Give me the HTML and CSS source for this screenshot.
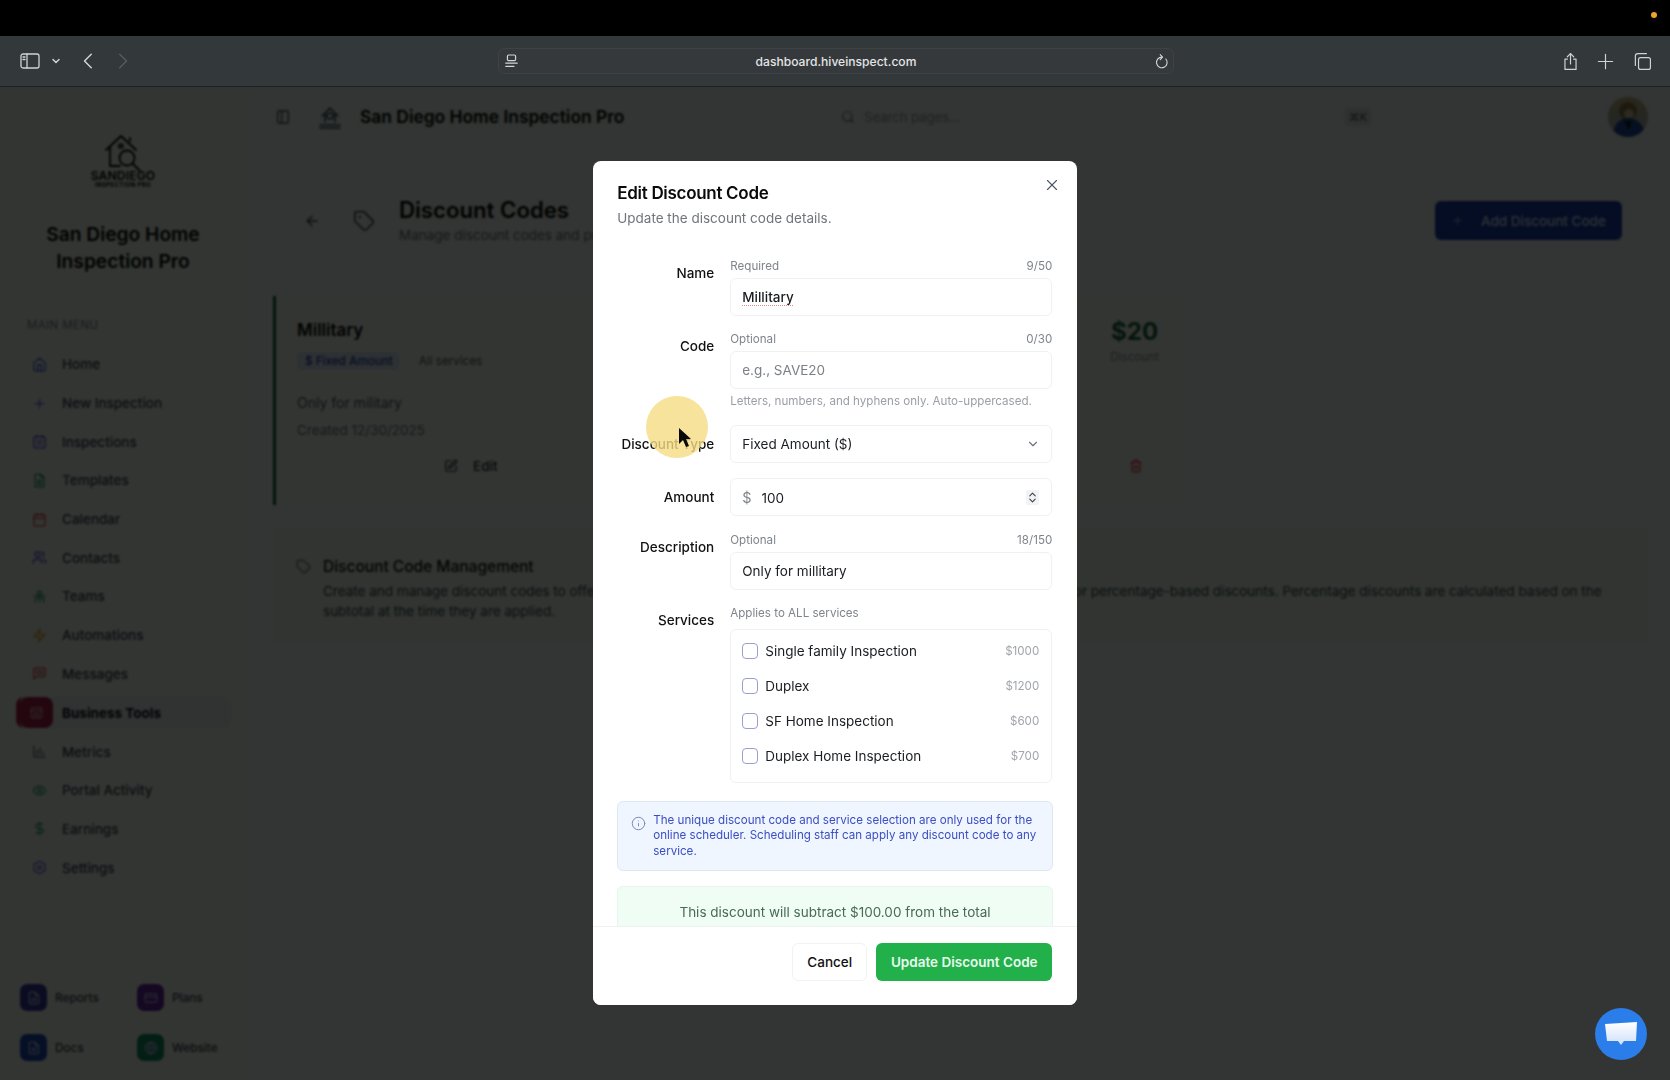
FILE: index.html
```html
<!DOCTYPE html>
<html lang="en">
<head>
<meta charset="utf-8">
<title>Discount Codes</title>
<link rel="stylesheet" href="styles.css">
</head>
<body>
<div class="os-bar"><span class="os-dot"></span></div>
<header class="toolbar">
  <div class="tb-left">
    <svg class="ic tb-panel" viewBox="0 0 20 16"><rect x="1" y="1" width="18" height="14" rx="2"/><path d="M7 1v14M3 4h2M3 6.500h2"/></svg>
    <svg class="ic tb-chev" viewBox="0 0 24 24"><path d="m6 9 6 6 6-6"/></svg>
    <svg class="ic tb-nav" viewBox="0 0 24 24"><path d="m15 3-9 9 9 9"/></svg>
    <svg class="ic tb-nav tb-off" viewBox="0 0 24 24"><path d="m9 3 9 9-9 9"/></svg>
  </div>
  <div class="url">
    <svg class="ic url-site" viewBox="0 0 16 18"><rect x="3" y="1" width="10" height="7" rx="1.500"/><path d="M1 11h14M1 15h10"/></svg>
    <span class="url-text">dashboard.hiveinspect.com</span>
    <svg class="ic url-reload" viewBox="0 0 24 24"><path d="M13 5a8.500 8.500 0 1 0 6 3"/><path d="m10 1 3.500 4-3.500 4"/></svg>
  </div>
  <div class="tb-right">
    <svg class="ic tb-act" viewBox="0 0 24 24"><path d="M8 9H5v13h14V9h-3"/><path d="M16 6l-4-4-4 4"/><path d="M12 2v13"/></svg>
    <svg class="ic tb-act" viewBox="0 0 24 24"><path d="M3 12h18M12 3v18"/></svg>
    <svg class="ic tb-act tb-tabs" viewBox="0 0 24 24"><rect x="7" y="7" width="15" height="15" rx="2.500"/><path d="M3 17V5a3 3 0 0 1 3-3h11"/></svg>
  </div>
</header>

<div class="app">
  <aside class="sidebar">
    <div class="brand">
      <svg class="ic logo-mark" viewBox="0 0 40 38"><path d="M3 17 18 3l15 14M7 14v19h10M27 8V5"/><path d="M16 11h4v4h-4zM18 11v4M16 13h4" class="thin"/><circle cx="24" cy="25" r="7.500"/><path d="m29.500 30.500 7 7"/></svg>
      <div class="logo-word">SANDIEGO</div>
      <div class="logo-sub">INSPECTION PRO</div>
      <h1 class="brand-name">San Diego Home Inspection Pro</h1>
    </div>
    <div class="menu-title">MAIN MENU</div>
    <nav class="nav">
      <a class="nav-item"><svg class="ic nav-ic c-blue" viewBox="0 0 24 24"><path d="m3 9 9-7 9 7v11a2 2 0 0 1-2 2H5a2 2 0 0 1-2-2z"/><path d="M9 22V12h6v10"/></svg>Home</a>
      <a class="nav-item"><svg class="ic nav-ic c-violet" viewBox="0 0 24 24"><path d="M5 12h14M12 5v14"/></svg>New Inspection</a>
      <a class="nav-item"><svg class="ic nav-ic c-indigo" viewBox="0 0 24 24"><rect x="3" y="4" width="18" height="18" rx="2"/><path d="M8 2v4M16 2v4M8 11h8M8 16h8"/></svg>Inspections</a>
      <a class="nav-item"><svg class="ic nav-ic c-green" viewBox="0 0 24 24"><path d="M14 2H5v20h14V7z"/><path d="M14 2v5h5M8 12h8M8 17h8M12 11v8"/></svg>Templates</a>
      <a class="nav-item"><svg class="ic nav-ic c-red" viewBox="0 0 24 24"><rect x="3" y="4" width="18" height="18" rx="2"/><path d="M16 2v4M8 2v4M3 10h18"/></svg>Calendar</a>
      <a class="nav-item"><svg class="ic nav-ic c-indigo" viewBox="0 0 24 24"><path d="M16 21v-2a4 4 0 0 0-4-4H6a4 4 0 0 0-4 4v2"/><circle cx="9" cy="7" r="4"/><path d="M22 21v-2a4 4 0 0 0-3-3.870"/><path d="M16 3.130a4 4 0 0 1 0 7.750"/></svg>Contacts</a>
      <a class="nav-item"><svg class="ic nav-ic c-green" viewBox="0 0 24 24"><circle cx="12" cy="6" r="3"/><path d="M5 21v-3a4 4 0 0 1 4-4h6a4 4 0 0 1 4 4v3M12 14v7M3 11h18"/></svg>Teams</a>
      <a class="nav-item"><svg class="ic nav-ic c-amber" viewBox="0 0 24 24"><path d="M13 2 3 14h9l-1 8 10-12h-9z"/></svg>Automations</a>
      <a class="nav-item"><svg class="ic nav-ic c-red" viewBox="0 0 24 24"><path d="M21 15a2 2 0 0 1-2 2H7l-4 4V5a2 2 0 0 1 2-2h14a2 2 0 0 1 2 2z"/><path d="M7 8h10M7 12h10"/></svg>Messages</a>
      <a class="nav-item nav-active"><span class="nav-badge"><svg class="ic nav-ic" viewBox="0 0 24 24"><path d="m3 9 2-5h14l2 5"/><path d="M4 9v11h16V9M3 9h18M9 20v-6h6v6"/></svg></span>Business Tools</a>
      <a class="nav-item"><svg class="ic nav-ic c-gray" viewBox="0 0 24 24"><path d="M3 3v18h18M8 17v-7M13 17V6M18 17v-4"/></svg>Metrics</a>
      <a class="nav-item"><svg class="ic nav-ic c-green" viewBox="0 0 24 24"><path d="M2 12s3.500-7 10-7 10 7 10 7-3.500 7-10 7-10-7-10-7z"/><circle cx="12" cy="12" r="3"/></svg>Portal Activity</a>
      <a class="nav-item"><svg class="ic nav-ic c-green" viewBox="0 0 24 24"><path d="M12 2v20"/><path d="M17 5H9.500a3.500 3.500 0 0 0 0 7h5a3.500 3.500 0 0 1 0 7H6"/></svg>Earnings</a>
      <a class="nav-item"><svg class="ic nav-ic c-violet" viewBox="0 0 24 24"><path d="m12 2 8.660 5v10L12 22l-8.660-5V7z"/><circle cx="12" cy="12" r="3"/></svg>Settings</a>
    </nav>
    <div class="quick">
      <a class="quick-item"><span class="quick-badge q-indigo"><svg class="ic" viewBox="0 0 24 24"><path d="M14 2H6a2 2 0 0 0-2 2v16a2 2 0 0 0 2 2h12a2 2 0 0 0 2-2V8z"/><path d="M14 2v6h6M16 13H8M16 17H8"/></svg></span>Reports</a>
      <a class="quick-item"><span class="quick-badge q-purple"><svg class="ic" viewBox="0 0 24 24"><rect x="2" y="5" width="20" height="14" rx="2"/><path d="M2 10h20"/></svg></span>Plans</a>
      <a class="quick-item"><span class="quick-badge q-blue"><svg class="ic" viewBox="0 0 24 24"><path d="M14 2H6a2 2 0 0 0-2 2v16a2 2 0 0 0 2 2h12a2 2 0 0 0 2-2V8z"/><path d="M14 2v6h6M16 13H8M16 17H8"/></svg></span>Docs</a>
      <a class="quick-item"><span class="quick-badge q-teal"><svg class="ic" viewBox="0 0 24 24"><circle cx="12" cy="12" r="10"/><path d="M2 12h20"/><path d="M12 2a15.300 15.300 0 0 1 4 10 15.300 15.300 0 0 1-4 10 15.300 15.300 0 0 1-4-10 15.300 15.300 0 0 1 4-10z"/></svg></span>Website</a>
    </div>
  </aside>

  <main class="main">
    <div class="topbar">
      <svg class="ic top-toggle" viewBox="0 0 24 24"><rect x="4" y="3" width="16" height="18" rx="2"/><path d="M10 3v18"/></svg>
      <svg class="ic top-logo" viewBox="0 0 24 24"><path d="M4 11 12 3l8 8M7 9v8M17 9v8"/><circle cx="12" cy="11" r="3"/><path d="M2 20h20M2 23h20"/></svg>
      <span class="top-title">San Diego Home Inspection Pro</span>
      <div class="search">
        <svg class="ic search-ic" viewBox="0 0 24 24"><circle cx="11" cy="11" r="8"/><path d="m21 21-4.300-4.300"/></svg>
        <span class="search-text">Search pages...</span>
        <kbd class="kbd">⌘K</kbd>
      </div>
      <svg class="avatar" viewBox="0 0 40 40"><defs><clipPath id="av"><circle cx="20" cy="20" r="20"/></clipPath></defs><g clip-path="url(#av)"><rect width="40" height="40" fill="#b9b6ac"/><path d="M0 0h40v12H0z" fill="#c9b792"/><circle cx="20" cy="14" r="9" fill="#8f7346"/><circle cx="21" cy="17" r="5" fill="#d9c3a8"/><path d="M5 40c0-14 8-19 15-19s17 5 17 19z" fill="#1f49a8"/><path d="M16 24h8l-3 9z" fill="#111"/></g></svg>
    </div>

    <section class="page-head">
      <svg class="ic back" viewBox="0 0 24 24"><path d="m12 19-7-7 7-7"/><path d="M19 12H5"/></svg>
      <svg class="ic head-tag" viewBox="0 0 24 24"><path d="M12.586 2.586A2 2 0 0 0 11.172 2H4a2 2 0 0 0-2 2v7.172a2 2 0 0 0 .586 1.414l8.704 8.704a2.426 2.426 0 0 0 3.420 0l6.580-6.580a2.426 2.426 0 0 0 0-3.420z"/><circle cx="7.500" cy="7.500" r=".5"/></svg>
      <div class="head-text">
        <h2 class="head-title">Discount Codes</h2>
        <p class="head-sub">Manage discount codes and promotions for your business</p>
      </div>
      <button class="add-btn"><svg class="ic add-ic" viewBox="0 0 24 24"><path d="M5 12h14M12 5v14"/></svg>Add Discount Code</button>
    </section>

    <article class="code-card">
      <div class="card-top">
        <div>
          <h3 class="card-title">Millitary</h3>
          <div class="card-tags"><span class="tag-blue">$ Fixed Amount</span><span class="tag-plain">All services</span></div>
        </div>
        <div class="card-value"><strong>$20</strong><span>Discount</span></div>
      </div>
      <p class="card-desc">Only for military</p>
      <p class="card-date">Created 12/30/2025</p>
      <div class="card-actions">
        <span class="card-edit"><svg class="ic edit-ic" viewBox="0 0 24 24"><path d="M12 3H5a2 2 0 0 0-2 2v14a2 2 0 0 0 2 2h14a2 2 0 0 0 2-2v-7"/><path d="M18.375 2.625a1 1 0 0 1 3 3l-9.013 9.014a2 2 0 0 1-.853.505l-2.873.84a.5.5 0 0 1-.62-.62l.84-2.873a2 2 0 0 1 .506-.852z"/></svg>Edit</span>
        <svg class="ic trash-ic" viewBox="0 0 24 24"><path d="M3 6h18"/><path d="M19 6v14c0 1-1 2-2 2H7c-1 0-2-1-2-2V6"/><path d="M8 6V4c0-1 1-2 2-2h4c1 0 2 1 2 2v2"/><path d="M10 11v6M14 11v6"/></svg>
      </div>
    </article>

    <section class="mgmt">
      <svg class="ic mgmt-ic" viewBox="0 0 24 24"><path d="M12.586 2.586A2 2 0 0 0 11.172 2H4a2 2 0 0 0-2 2v7.172a2 2 0 0 0 .586 1.414l8.704 8.704a2.426 2.426 0 0 0 3.420 0l6.580-6.580a2.426 2.426 0 0 0 0-3.420z"/></svg>
      <div>
        <h3 class="mgmt-title">Discount Code Management</h3>
        <p class="mgmt-text">Create and manage discount codes to offer special pricing to all your clients. You can create both fixed dollar amount or percentage-based discounts. Percentage discounts are calculated based on the subtotal at the time they are applied.</p>
      </div>
    </section>
  </main>

  <div class="overlay">
    <div class="modal">
      <svg class="ic modal-close" viewBox="0 0 24 24"><path d="M18 6 6 18"/><path d="m6 6 12 12"/></svg>
      <div class="modal-head">
        <h2 class="modal-title">Edit Discount Code</h2>
        <p class="modal-sub">Update the discount code details.</p>
      </div>
      <div class="modal-body">
        <div class="form-row">
          <label class="form-label lab-hint">Name</label>
          <div>
            <div class="hint-row"><span>Required</span><span>9/50</span></div>
            <div class="field"><span class="spell">Millitary</span></div>
          </div>
        </div>
        <div class="form-row">
          <label class="form-label lab-hint">Code</label>
          <div>
            <div class="hint-row"><span>Optional</span><span>0/30</span></div>
            <div class="field field-ph">e.g., SAVE20</div>
            <p class="help">Letters, numbers, and hyphens only. Auto-uppercased.</p>
          </div>
        </div>
        <div class="form-row">
          <label class="form-label lab-center">Discount Type</label>
          <div class="field field-between">Fixed Amount ($)<svg class="ic sel-chev" viewBox="0 0 24 24"><path d="m6 9 6 6 6-6"/></svg></div>
        </div>
        <div class="form-row">
          <label class="form-label lab-center">Amount</label>
          <div class="field field-between"><span><span class="dollar">$</span>100</span><svg class="ic spin" viewBox="0 0 24 24"><path d="m7 15 5 5 5-5"/><path d="m7 9 5-5 5 5"/></svg></div>
        </div>
        <div class="form-row">
          <label class="form-label lab-hint">Description</label>
          <div>
            <div class="hint-row"><span>Optional</span><span>18/150</span></div>
            <div class="field">Only for millitary</div>
          </div>
        </div>
        <div class="form-row">
          <label class="form-label lab-hint">Services</label>
          <div>
            <div class="hint-row hint-services"><span>Applies to ALL services</span></div>
            <div class="services">
              <div class="svc"><span class="check"></span><span class="svc-name">Single family Inspection</span><span class="svc-price">$1000</span></div>
              <div class="svc"><span class="check"></span><span class="svc-name">Duplex</span><span class="svc-price">$1200</span></div>
              <div class="svc"><span class="check"></span><span class="svc-name">SF Home Inspection</span><span class="svc-price">$600</span></div>
              <div class="svc"><span class="check"></span><span class="svc-name">Duplex Home Inspection</span><span class="svc-price">$700</span></div>
            </div>
          </div>
        </div>
        <div class="note">
          <svg class="ic note-ic" viewBox="0 0 24 24"><circle cx="12" cy="12" r="10"/><path d="M12 16v-4"/><path d="M12 8h.01"/></svg>
          <p>The unique discount code and service selection are only used for the online scheduler. Scheduling staff can apply any discount code to any service.</p>
        </div>
        <div class="preview">This discount will subtract $100.00 from the total</div>
      </div>
      <div class="modal-foot">
        <button class="btn-cancel">Cancel</button>
        <button class="btn-save">Update Discount Code</button>
      </div>
      <span class="cursor-halo"></span>
      <svg class="cursor" viewBox="0 0 14 22"><path d="M1 1v16l4-4 3 7 3-1-3-7h5z"/></svg>
    </div>
  </div>

  <button class="chat"><svg viewBox="0 0 32 24"><defs><linearGradient id="cg" x1="0" y1="0" x2="0" y2="1"><stop offset="0" stop-color="#ffffff"/><stop offset="1" stop-color="#cfe0fa"/></linearGradient></defs><path d="M0 2 32 0l-1 19H19l-3 4-3-4H2z" fill="url(#cg)"/></svg></button>
</div>
</body>
</html>
```
FILE: styles.css
```css
* { box-sizing: border-box; }
html, body { margin: 0; height: 100%; }
body {
  width: 1670px;
  height: 1080px;
  overflow: hidden;
  font-family: Inter, "Liberation Sans", sans-serif;
  font-size: 13.500px;
  color: #111827;
  background: #000;
  display: flex;
  flex-direction: column;
}
h1, h2, h3, p { margin: 0; }
button { font: inherit; border: 0; padding: 0; }

.ic {
  fill: none;
  stroke: currentColor;
  stroke-width: 2;
  stroke-linecap: round;
  stroke-linejoin: round;
  flex: none;
  display: block;
}

/* OS + browser chrome */
.os-bar { height: 36px; background: #000; display: flex; justify-content: flex-end; align-items: center; padding: 0 13px 7px 0; flex: none; }
.os-dot { width: 6px; height: 6px; border-radius: 50%; background: #f0a02c; }
.toolbar {
  height: 51px;
  flex: none;
  background: #33383a;
  border-bottom: 1px solid #1f2224;
  display: grid;
  grid-template-columns: 1fr 676px 1fr;
  align-items: center;
  padding: 0 18px 0 20px;
}
.tb-left { display: flex; align-items: center; color: #cfd3d5; }
.tb-panel { width: 20px; height: 16px; stroke-width: 1.300; }
.tb-chev { width: 12px; height: 12px; margin-left: 10px; stroke-width: 3; }
.tb-nav { width: 18px; height: 18px; margin-left: 18px; stroke-width: 2; }
.tb-nav + .tb-nav { margin-left: 15px; }
.tb-off { color: #565b5d; }
.url {
  height: 26px;
  display: flex;
  align-items: center;
  justify-content: space-between;
  border: 1px solid #3d4244;
  border-radius: 6px;
  background: #35393b;
  padding: 0 4px 0 6px;
  color: #d3d6d8;
}
.url-site { width: 13px; height: 15px; stroke-width: 1.500; }
.url-text { font-size: 12.100px; font-weight: 500; color: #e3e5e6; }
.url-reload { width: 15px; height: 15px; stroke-width: 1.800; }
.tb-right { display: flex; justify-content: flex-end; align-items: center; gap: 16px; color: #cfd3d5; }
.tb-act { width: 19px; height: 19px; stroke-width: 1.500; }
.tb-tabs { margin-left: 2px; }

/* App */
.app { position: relative; flex: 1; display: flex; min-height: 0; background: #fff; overflow: hidden; }
.sidebar { width: 250px; flex: none; display: flex; flex-direction: column; padding: 46px 0 0 16px; }
.brand { width: 214px; display: flex; flex-direction: column; align-items: center; }
.logo-mark { width: 40px; height: 38px; color: #000; stroke-width: 1.800; }
.logo-word { font-size: 12px; line-height: 10px; font-weight: 600; color: #000; letter-spacing: .2px; margin-top: 0; }
.logo-mark .thin { stroke-width: 1; }
.logo-sub { font-size: 6px; line-height: 7px; font-weight: 700; color: #000; letter-spacing: .35px; }
.brand-name { font-size: 19.200px; line-height: 27px; font-weight: 600; text-align: center; width: 180px; color: #000; margin-top: 33px; }
.menu-title { font-size: 11.500px; line-height: 14px; color: #7b8190; margin: 43px 0 0 11px; letter-spacing: .4px; }
.nav { margin-top: 13px; display: flex; flex-direction: column; }
.nav-item {
  height: 38.700px;
  display: flex;
  align-items: center;
  gap: 15px;
  padding-left: 16px;
  width: 215px;
  font-size: 13.500px;
  font-weight: 500;
  color: #374151;
}
.nav-ic { width: 15px; height: 15px; }
.c-blue { color: #3f57e8; }
.c-violet { color: #6d4cf0; }
.c-indigo { color: #4f46e5; }
.c-green { color: #1fa35a; }
.c-red { color: #e0423f; }
.c-amber { color: #eb9a12; }
.c-gray { color: #5f6773; }
.nav-active {
  height: 31px;
  margin: 4px 0;
  padding-left: 0;
  gap: 9px;
  font-weight: 700;
  color: #0b0f19;
  background: #eef2f9;
  border-radius: 8px;
  border-left: 4px solid #b0184a;
}
.nav-badge { width: 33px; height: 31px; border-radius: 8px; background: #b0184a; color: #e8a9bf; display: flex; align-items: center; justify-content: center; }
.quick { margin-top: auto; display: grid; grid-template-columns: 117px 1fr; row-gap: 23px; padding: 0 0 19px 4px; }
.quick-item { display: flex; align-items: center; gap: 8px; font-size: 11.800px; font-weight: 500; color: #374151; }
.quick-badge { width: 27px; height: 27px; border-radius: 7px; display: flex; align-items: center; justify-content: center; color: #c9cdf5; }
.quick-badge .ic { width: 14px; height: 14px; }
.q-indigo { background: #3a32a8; }
.q-purple { background: #6a1eab; }
.q-blue { background: #1a44ba; }
.q-teal { background: #0d8a69; }

/* Main */
.main { flex: 1; min-width: 0; padding: 0 22px 0 23px; background: #fbfcfe; }
.topbar { height: 60px; display: flex; align-items: center; padding-left: 2px; }
.top-toggle { width: 16px; height: 16px; color: #4b5563; }
.top-logo { width: 24px; height: 24px; margin-left: 27px; color: #374151; stroke-width: 1.500; }
.top-title { font-size: 17.400px; font-weight: 600; margin: 0 0 2px 18px; color: #000; }
.search { display: flex; align-items: center; width: 530px; margin-left: 217px; color: #6b7280; }
.search-ic { width: 14px; height: 14px; }
.search-text { margin-left: 9px; font-size: 13px; color: #9ca3af; }
.kbd { margin-left: auto; font: 600 11px Inter, sans-serif; background: #e5e7eb; color: #6b7280; padding: 2px 4px; border-radius: 3px; }
.avatar { width: 40px; height: 40px; margin-left: auto; flex: none; }

.page-head { display: flex; align-items: center; height: 39px; margin-top: 54px; padding: 0 26px 0 31px; }
.back { width: 16px; height: 16px; color: #374151; }
.head-tag { width: 22px; height: 22px; margin-left: 33px; color: #374151; stroke-width: 1.700; }
.head-text { margin-left: 24px; }
.head-title { font-size: 22.200px; line-height: 28px; font-weight: 600; color: #000; }
.head-sub { font-size: 13.500px; line-height: 20px; color: #6b7280; margin-top: 1px; }
.add-btn { margin-left: auto; width: 187px; height: 39px; border-radius: 6px; background: #1a38b4; color: #dbeafe; display: flex; align-items: center; font-size: 13.500px; font-weight: 500; padding-left: 16px; gap: 17px; }
.add-ic { width: 13px; height: 13px; color: #93a9f5; }

.code-card { width: 910px; height: 209px; margin-top: 56px; background: #fff; border-left: 3px solid #0f5f42; padding: 23px 24px 0 21px; display: flex; flex-direction: column; }
.card-top { display: flex; justify-content: space-between; }
.card-title { font-size: 17px; line-height: 22px; font-weight: 600; color: #000; }
.card-tags { display: flex; align-items: center; gap: 20px; margin-top: 11px; font-size: 11.700px; }
.tag-blue { background: #e3eafd; color: #1e40af; border-radius: 4px; padding: 2px 6px 2px 8px; font-weight: 500; }
.tag-plain { color: #4b5563; }
.card-value { text-align: center; display: flex; flex-direction: column; margin-top: -2px; }
.card-value strong { font-size: 24px; line-height: 30px; color: #15603d; font-weight: 700; }
.card-value span { font-size: 11.700px; line-height: 20px; color: #8a919c; }
.card-desc { margin-top: 23px; font-size: 14px; line-height: 20px; color: #4b5563; }
.card-date { margin-top: 7px; font-size: 13.500px; line-height: 20px; color: #6b7280; }
.card-actions { display: flex; justify-content: space-between; align-items: center; margin-top: 18px; padding-left: 147px; padding-right: 16px; }
.card-edit { display: flex; align-items: center; gap: 15px; font-weight: 500; color: #1f2937; }
.edit-ic { width: 14px; height: 14px; }
.trash-ic { width: 14px; height: 14px; color: #dc2626; }

.mgmt { margin-top: 23px; height: 116px; background: #f3fbf5; padding: 28px 40px 0 23px; display: flex; gap: 12px; }
.mgmt-ic { width: 15px; height: 15px; margin-top: 3px; color: #6b7a70; }
.mgmt-title { font-size: 15.500px; line-height: 22px; font-weight: 500; color: #111; }
.mgmt-text { margin-top: 3px; font-size: 13.500px; line-height: 20px; color: #374151; }

/* Dialog */
.overlay {
  position: absolute;
  inset: 0;
  background: rgba(0, 2, 0, .8);
  backdrop-filter: blur(.8px);
  padding-bottom: 2px;
  display: flex;
  align-items: center;
  justify-content: center;
}
.modal {
  position: relative;
  width: 483.500px;
  height: 844px;
  background: #fff;
  border-radius: 8px;
  display: flex;
  flex-direction: column;
  overflow: hidden;
}
.modal-close { position: absolute; top: 15px; right: 16px; width: 18px; height: 18px; color: #4b5563; stroke-width: 1.500; }
.modal-head { padding: 21px 24px 0; flex: none; }
.modal-title { font-size: 17px; line-height: 22px; font-weight: 600; letter-spacing: -.3px; color: #0a0a0a; }
.modal-sub { margin-top: 4px; font-size: 13.500px; line-height: 20px; color: #6f757d; }
.modal-body { flex: 1; min-height: 0; overflow: hidden; padding: 30px 24px 0; display: flex; flex-direction: column; }
.form-row { display: grid; grid-template-columns: 97px 322px; column-gap: 16px; margin-bottom: 15.500px; }
.form-label { text-align: right; font-size: 13.500px; font-weight: 500; color: #111; line-height: 20px; }
.lab-hint { padding-top: 5px; }
.lab-center { align-self: center; }
.hint-row { display: flex; justify-content: space-between; font-size: 11.600px; line-height: 16px; color: #7f858c; margin-bottom: 4px; }
.hint-services { margin-bottom: 8px; }
.field {
  height: 38px;
  border: 1px solid #eff1f3;
  border-radius: 6px;
  display: flex;
  align-items: center;
  padding: 0 11px;
  font-size: 13.500px;
  color: #1a1d21;
}
.field-between { justify-content: space-between; }
.field-ph { color: #7b8087; }
.spell { text-decoration: underline dotted #e58a94 1px; text-underline-offset: 3px; font-weight: 500; }
.sel-chev { width: 14px; height: 14px; color: #6b7280; }
.spin { width: 13px; height: 15px; color: #3c4046; background: #f2f3f5; border-radius: 2px; margin-right: 1px; }
.dollar { color: #80858b; margin-right: 10px; font-size: 14.500px; }
.help { margin-top: 4px; font-size: 11.600px; line-height: 16px; color: #9a9fa6; margin-bottom: 0; }
.services { border: 1px solid #eff1f3; border-radius: 6px; padding: 4px 12px 9px 11px; }
.svc { height: 34.800px; display: flex; align-items: center; gap: 7px; font-size: 13.500px; color: #1a1d21; }
.check { width: 16px; height: 16px; border: 1.500px solid #9a9fcf; border-radius: 4px; flex: none; }
.svc-name { flex: 1; }
.svc-price { font-size: 11.600px; color: #a2a6ab; }
.note {
  flex: none;
  display: flex;
  gap: 7px;
  padding: 11px 13px;
  background: #eff6ff;
  border: 1px solid #dfe7f3;
  border-radius: 6px;
  margin-top: 2px;
  font-size: 11.600px;
  line-height: 15.500px;
  color: #3c4ec2;
}
.note-ic { width: 15px; height: 15px; margin-top: 3px; color: #7c88bd; stroke-width: 1.600; }
.preview {
  flex: none;
  margin-top: 15px;
  height: 60px;
  background: #f0fdf4;
  border: 1px solid #e3f7ea;
  border-radius: 6px;
  padding-top: 15px;
  text-align: center;
  font-size: 13.500px;
  line-height: 20px;
  color: #4a6a55;
}
.modal-foot { flex: none; height: 79px; border-top: 1px solid #f0f1f2; background: #fff; padding: 16px 24.500px 0 24px; display: flex; justify-content: flex-end; gap: 9px; }
.btn-cancel { width: 75px; height: 38px; background: #fff; border: 1px solid #f1f2f3; border-radius: 6px; font-size: 13.500px; font-weight: 500; color: #111; }
.btn-save { width: 176px; height: 38px; background: #21b04a; border-radius: 6px; font-size: 13.500px; font-weight: 600; color: #e9fbef; }
.cursor-halo { position: absolute; left: 53px; top: 235px; width: 62px; height: 62px; border-radius: 50%; background: rgba(245, 220, 130, .8); pointer-events: none; }
.cursor { position: absolute; left: 85px; top: 266px; width: 14px; height: 22px; fill: #0a0a0a; }

.chat { position: absolute; left: 1595px; top: 921px; width: 52px; height: 52px; border-radius: 50%; background: #2b7de9; display: flex; align-items: center; justify-content: center; }
.chat svg { width: 32px; height: 24px; }
```
